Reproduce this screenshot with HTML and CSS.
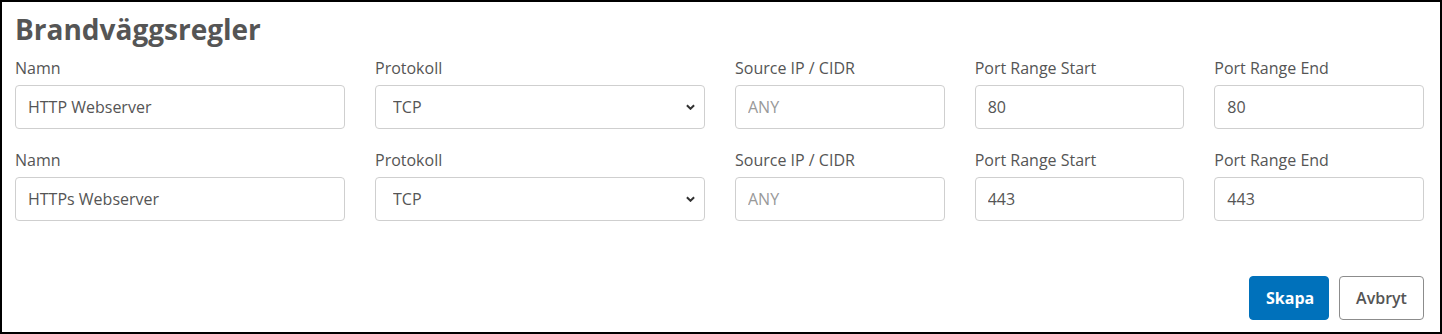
FILE: index.html
```html
<!DOCTYPE html>
<html lang="sv">
<head>
<meta charset="utf-8">
<title>Brandväggsregler</title>
<link rel="stylesheet" href="styles.css">
</head>
<body>
<div class="panel">
  <h1 class="title">Brandväggsregler</h1>
  <div class="rules">
    <div class="rule">
      <div class="field">
        <label class="label">Namn</label>
        <input class="input" type="text" value="HTTP Webserver">
      </div>
      <div class="field">
        <label class="label">Protokoll</label>
        <select class="input select"><option>TCP</option></select>
      </div>
      <div class="field">
        <label class="label">Source IP / CIDR</label>
        <input class="input" type="text" placeholder="ANY">
      </div>
      <div class="field">
        <label class="label">Port Range Start</label>
        <input class="input" type="text" value="80">
      </div>
      <div class="field">
        <label class="label">Port Range End</label>
        <input class="input" type="text" value="80">
      </div>
    </div>
    <div class="rule">
      <div class="field">
        <label class="label">Namn</label>
        <input class="input" type="text" value="HTTPs Webserver">
      </div>
      <div class="field">
        <label class="label">Protokoll</label>
        <select class="input select"><option>TCP</option></select>
      </div>
      <div class="field">
        <label class="label">Source IP / CIDR</label>
        <input class="input" type="text" placeholder="ANY">
      </div>
      <div class="field">
        <label class="label">Port Range Start</label>
        <input class="input" type="text" value="443">
      </div>
      <div class="field">
        <label class="label">Port Range End</label>
        <input class="input" type="text" value="443">
      </div>
    </div>
  </div>
  <div class="actions">
    <button class="btn btn-primary" type="button">Skapa</button>
    <button class="btn btn-secondary" type="button">Avbryt</button>
  </div>
</div>
</body>
</html>
```

FILE: styles.css
```css
* { box-sizing: border-box; }
html, body { margin: 0; padding: 0; background: #fff; }
body { font-family: "Open Sans", "Liberation Sans", sans-serif; color: #555; }

.panel {
  width: 1442px;
  height: 334px;
  border: 2px solid #000;
  padding: 9px 16px 12px 13px;
  display: flex;
  flex-direction: column;
}

.title {
  margin: 0 0 9px 0;
  font-size: 28px;
  line-height: 36px;
  font-weight: 700;
  color: #555;
}

.rules {
  display: flex;
  flex-direction: column;
  gap: 19px;
}

.rule {
  display: grid;
  grid-template-columns: 330px 330px 1fr 1fr 1fr;
  column-gap: 30px;
}

.field {
  display: flex;
  flex-direction: column;
}

.label {
  font-size: 16px;
  line-height: 24px;
  margin-bottom: 5px;
  color: #555;
}

.input {
  height: 44px;
  width: 100%;
  border: 1px solid #cfcfcf;
  border-radius: 4px;
  padding: 0 12px;
  font-family: "Open Sans", "Liberation Sans", sans-serif;
  font-size: 16px;
  color: #555;
  background: #fff;
  outline: none;
}
.input::placeholder { color: #999; opacity: 1; }

.select {
  appearance: none;
  -webkit-appearance: none;
  padding-left: 17px;
  background-image: url("data:image/svg+xml;utf8,<svg xmlns='http://www.w3.org/2000/svg' width='10' height='6' viewBox='0 0 10 6'><path d='M1 1l4 4 4-4' fill='none' stroke='%23333' stroke-width='2.2'/></svg>");
  background-repeat: no-repeat;
  background-position: right 9px center;
  background-size: 9px 6px;
}

.actions {
  margin-top: auto;
  display: flex;
  justify-content: flex-end;
  gap: 10px;
}

.btn {
  height: 44px;
  border-radius: 4px;
  font-family: "Open Sans", "Liberation Sans", sans-serif;
  font-size: 16px;
  padding: 0 16px;
  cursor: pointer;
}

.btn-primary {
  width: 80px;
  background: #0071bb;
  border: 1px solid #0071bb;
  color: #fff;
  font-weight: 700;
}

.btn-secondary {
  width: 85px;
  background: #fff;
  border: 1px solid #8c8c8c;
  color: #555;
  font-weight: 600;
}
```
